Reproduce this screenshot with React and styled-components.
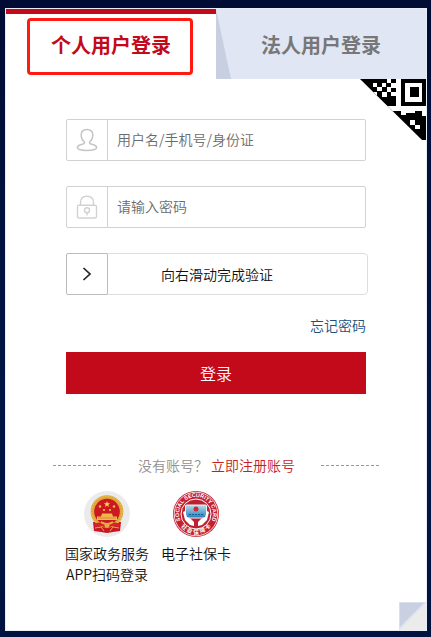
import React, { useState } from 'react'
import styled, { createGlobalStyle } from 'styled-components'

const GlobalStyle = createGlobalStyle`
* {
    box-sizing: border-box;
}

body {
    margin: 0;
    background: linear-gradient(#010c35, #001746 70%, #00133f);
    font-family: "Noto Sans CJK SC", "Open Sans", sans-serif;
    font-size: 14px;
    font-weight: 350;
    line-height: 21px;
    color: #111;
}

button, input {
    font: inherit;
}
`

const Page = styled.main`
padding: 8px 4px 6px 5px;
`

const Card = styled.section`
position: relative;
min-height: calc(100vh - 14px);
background: #fff;
border: 1px solid #e9ecf4;
`

const Tabs = styled.div`
display: grid;
grid-template-columns: 1fr 1fr;
`

const Tab = styled.button`
position: relative;
height: 70px;
padding: 0;
border: 0;
background: ${(props) => (props.$active ? '#fff' : '#e0e6f3')};
box-shadow: ${(props) => (props.$active ? 'inset 0 5px #c20a1b' : 'none')};
color: ${(props) => (props.$active ? '#c20a1b' : '#777')};
font-size: 20px;
font-weight: bold;
cursor: pointer;
`

const Highlight = styled.span`
position: absolute;
inset: 9px 23px 4px 21px;
border: 3px solid #ff1a12;
border-radius: 4px;
`

const TabSlant = styled.span`
position: absolute;
left: 0;
top: 0;
width: 15px;
height: 100%;
background: #c8cfe0;
clip-path: polygon(0 0, 100% 100%, 0 100%);
`

const QrCorner = styled.svg`
position: absolute;
right: 0;
top: 70px;
`

const FoldCorner = styled.svg`
position: absolute;
right: 0;
bottom: 0;
`

const Form = styled.form`
padding: 40px 60px 0;
`

const Field = styled.label`
display: flex;
height: 42px;
margin-bottom: 25px;
border: 1px solid #d2d2d2;
border-radius: 2px;
`

const FieldIcon = styled.span`
display: flex;
align-items: center;
justify-content: center;
width: 41px;
border-right: 1px solid #d2d2d2;
`

const FieldInput = styled.input`
flex: 1;
min-width: 0;
padding: 0 9px 2px;
border: 0;
outline: 0;
background: transparent;

&::placeholder {
    color: #6c6c6c;
    opacity: 1;
}
`

const Slider = styled.label`
position: relative;
display: flex;
align-items: center;
justify-content: center;
height: 42px;
margin-right: -2px;
border: 1px solid #ddd;
border-radius: 4px;
`

const SliderHandle = styled.span`
position: absolute;
top: -1px;
display: flex;
align-items: center;
justify-content: center;
width: 42px;
height: 42px;
background: #fff;
border: 1px solid #bbb;
border-radius: 2px;
`

const SliderInput = styled.input`
position: absolute;
inset: 0;
width: 100%;
height: 100%;
margin: 0;
opacity: 0;
cursor: pointer;
`

const Forgot = styled.div`
display: flex;
justify-content: flex-end;
padding: 20px 0 16px;
`

const Link = styled.a`
color: ${(props) => props.$color};
text-decoration: none;
`

const LoginButton = styled.button`
display: block;
width: 100%;
height: 42px;
padding: 0;
border: 0;
background: #c20a1b;
color: #fff;
font-size: 16px;
cursor: pointer;
`

const Register = styled.div`
display: flex;
align-items: center;
justify-content: space-between;
margin: 61px 46px 0 47px;
`

const Dashes = styled.span`
width: 59px;
height: 1px;
background: repeating-linear-gradient(90deg, #999 0 3px, transparent 3px 5px);
`

const RegisterText = styled.span`
color: #909090;
`

const OtherLogins = styled.div`
display: flex;
gap: 12px;
padding: 15px 59px 40px;
`

const OtherLogin = styled.a`
display: flex;
flex-direction: column;
align-items: center;
color: #111;
text-align: center;
text-decoration: none;

svg {
    margin-bottom: 6px;
}
`

const UserIcon = () => (
    <svg width="22" height="24" viewBox="0 0 22 24" fill="none" stroke="#c4c4c4" strokeWidth="1.5">
        <path d="M8.3 13.8C6.4 12.4 5.2 9.7 5.2 7C5.2 3.5 7.5 1.5 11 1.5S16.8 3.5 16.8 7C16.8 9.7 15.6 12.4 13.7 13.8C13.1 15.4 14.4 16 16.8 16.6C19.5 17.3 20.6 18.2 20.6 19.6C20.6 21.7 16.5 22.5 11 22.5S1.4 21.7 1.4 19.6C1.4 18.2 2.5 17.3 5.2 16.6C7.6 16 8.9 15.4 8.3 13.8Z" />
    </svg>
)

const LockIcon = () => (
    <svg width="22" height="24" viewBox="0 0 22 24" fill="none" stroke="#d2d2d2" strokeWidth="1.4">
        <rect x="1.5" y="10.2" width="19" height="12.8" rx="1.5" />
        <path d="M4.5 10V7.5C4.5 3.8 7 1.3 11 1.3S17.5 3.8 17.5 7.5V10" />
        <circle cx="11" cy="15.3" r="2.5" />
        <path d="M11 17.8V20.5" />
    </svg>
)

const QrCode = () => (
    <QrCorner width="71" height="62" viewBox="0 0 71 62" aria-hidden="true">
        <defs>
            <clipPath id="qrCut">
                <path d="M5 0H71V61H67Z" />
            </clipPath>
        </defs>
        <g clipPath="url(#qrCut)">
            <path d="M0 0H71V62H0Z" fill="#000" />
            <g fill="#fff">
                <path d="M18 4h4v4h-4zM27 4h4v4h-4zM22 8h5v4h-5zM32 0h4v4h-4zM36 4h5v5h-5zM32 8h4v5h-4zM18 13h4v4h-4zM27 13h5v5h-5zM36 13h5v4h-5z" />
                <path d="M41 0h5v27h25v5H60v2H51v2h-5v-4H32v-5h9z" />
                <path d="M50 4h17v19H50z" />
                <path d="M67 32h4v5h-4zM55 41h5v5h-5zM60 46h5v4h-5z" />
            </g>
            <path d="M55 8h9v10h-9z" />
        </g>
    </QrCorner>
)

const StateEmblem = () => (
    <svg width="46" height="46" viewBox="0 0 46 46" aria-hidden="true">
        <circle cx="23" cy="23" r="23" fill="#ebebeb" />
        <path d="M9 31L10 40L17 41L23 42L29 41L36 40L37 31Z" fill="#c81622" />
        <circle cx="23" cy="20.5" r="14.6" fill="#cc1820" stroke="#dfa63b" strokeWidth="3.5" />
        <circle cx="23" cy="20.5" r="15.2" fill="none" stroke="#f0ca65" strokeWidth="1" strokeDasharray="1.5 1.5" />
        <path d="M23 10l.8 2.2h2.4l-1.9 1.5.7 2.3L23 14.6 21 16l.7-2.3-1.9-1.5h2.4z" fill="#ffd84d" />
        <g fill="#f4c344">
            <circle cx="16" cy="15.5" r="1.2" />
            <circle cx="30" cy="15.5" r="1.2" />
            <circle cx="20" cy="19" r="1.1" />
            <circle cx="26" cy="19" r="1.1" />
        </g>
        <path d="M18 22.5H28L29 25.5H33V29H13V25.5H17Z" fill="#edb84c" />
        <path d="M14 27H32" stroke="#d58a2b" strokeWidth="1" />
        <path d="M10 33Q16 30 19 33H27Q30 30 36 33L35 36L28 35L23 38L18 35L11 36Z" fill="#d8222b" />
        <path d="M17 31Q23 35 29 31" fill="none" stroke="#e5ad42" strokeWidth="2" />
        <circle cx="23" cy="34.5" r="2.5" fill="#e5ad42" />
        <path d="M11 37L17 36L20 40M35 37L29 36L26 40" fill="none" stroke="#e7a84c" strokeWidth="1" />
    </svg>
)

const SocialCardLogo = () => (
    <svg width="46" height="46" viewBox="0 0 46 46" aria-hidden="true">
        <defs>
            <path id="ringTop" d="M7.7 30.1A16.9 16.9 0 1 1 38.3 30.1" />
            <path id="ringBottom" d="M3.5 28A20.3 20.3 0 0 0 42.5 28" />
            <linearGradient id="cardBlue" x2="0" y2="1">
                <stop stopColor="#b9ddea" />
                <stop offset="1" stopColor="#237cb6" />
            </linearGradient>
        </defs>
        <circle cx="23" cy="23" r="23" fill="#c52031" />
        <circle cx="23" cy="23" r="21.8" fill="none" stroke="#fff" strokeWidth="0.8" />
        <circle cx="23" cy="23" r="15" fill="#bd2030" stroke="#fff" strokeWidth="1" />
        <g fill="#fff" fontFamily="Liberation Sans, Noto Sans CJK SC, sans-serif" fontWeight="bold" textAnchor="middle">
            <text fontSize="5.4">
                <textPath href="#ringTop" startOffset="50%">SOCIAL SECURITY CARD</textPath>
            </text>
            <text fontSize="5.6">
                <textPath href="#ringBottom" startOffset="50%">社 会 保 障 卡</textPath>
            </text>
        </g>
        <rect x="12.5" y="14" width="21" height="13" rx="1" fill="url(#cardBlue)" stroke="#e8f5fb" />
        <circle cx="23" cy="18" r="2.5" fill="#cf2734" />
        <path d="M16 23.5H30" stroke="#195f9d" strokeWidth="1" strokeDasharray="2 1" />
        <path d="M10 21L12 20L14 26L18 28L21 31V35L17 34L12 29ZM36 21L34 20L32 26L28 28L25 31V35L29 34L34 29Z" fill="#fff" />
    </svg>
)

const App = () => {
    const [activeTab, setActiveTab] = useState('personal')
    const [slide, setSlide] = useState(0)

    const submitHandler = (e) => {
        e.preventDefault()
    }

    return (
        <Page>
            <GlobalStyle />
            <Card>
                <Tabs role="tablist">
                    <Tab type="button" role="tab" aria-selected={activeTab === 'personal'} $active={activeTab === 'personal'} onClick={() => setActiveTab('personal')}>
                        个人用户登录
                        {activeTab === 'personal' ? <Highlight /> : null}
                    </Tab>
                    <Tab type="button" role="tab" aria-selected={activeTab === 'legal'} $active={activeTab === 'legal'} onClick={() => setActiveTab('legal')}>
                        {activeTab === 'personal' ? <TabSlant /> : null}
                        法人用户登录
                    </Tab>
                </Tabs>
                <QrCode />
                <Form onSubmit={submitHandler}>
                    <Field>
                        <FieldIcon><UserIcon /></FieldIcon>
                        <FieldInput type="text" placeholder="用户名/手机号/身份证" />
                    </Field>
                    <Field>
                        <FieldIcon><LockIcon /></FieldIcon>
                        <FieldInput type="password" placeholder="请输入密码" />
                    </Field>
                    <Slider>
                        向右滑动完成验证
                        <SliderHandle style={{ left: `calc((100% - 40px) * ${slide / 100} - 1px)` }}>
                            <svg width="10" height="16" viewBox="0 0 10 16" fill="none" stroke="#222" strokeWidth="1.7">
                                <path d="M1.5 2L8 8L1.5 14" />
                            </svg>
                        </SliderHandle>
                        <SliderInput type="range" min="0" max="100" value={slide} onChange={(e) => setSlide(Number(e.target.value))} />
                    </Slider>
                    <Forgot>
                        <Link href="#forgot" $color="#20527d">忘记密码</Link>
                    </Forgot>
                    <LoginButton type="submit">登录</LoginButton>
                </Form>
                <Register>
                    <Dashes />
                    <RegisterText>
                        没有账号？ <Link href="#register" $color="#c41f24">立即注册账号</Link>
                    </RegisterText>
                    <Dashes />
                </Register>
                <OtherLogins>
                    <OtherLogin href="#gov-app">
                        <StateEmblem />
                        <span>国家政务服务</span>
                        <span>APP扫码登录</span>
                    </OtherLogin>
                    <OtherLogin href="#social-card">
                        <SocialCardLogo />
                        <span>电子社保卡</span>
                    </OtherLogin>
                </OtherLogins>
                <FoldCorner width="27" height="28" viewBox="0 0 27 28" aria-hidden="true">
                    <path d="M0 0H27V28H0Z" fill="#ebebeb" />
                    <path d="M0 0H27L0 28Z" fill="#c9d0e2" />
                    <path d="M0 27V0H27L0 27" fill="none" stroke="#dfe4f0" strokeWidth="1.5" />
                </FoldCorner>
            </Card>
        </Page>
    )
}

export default App
